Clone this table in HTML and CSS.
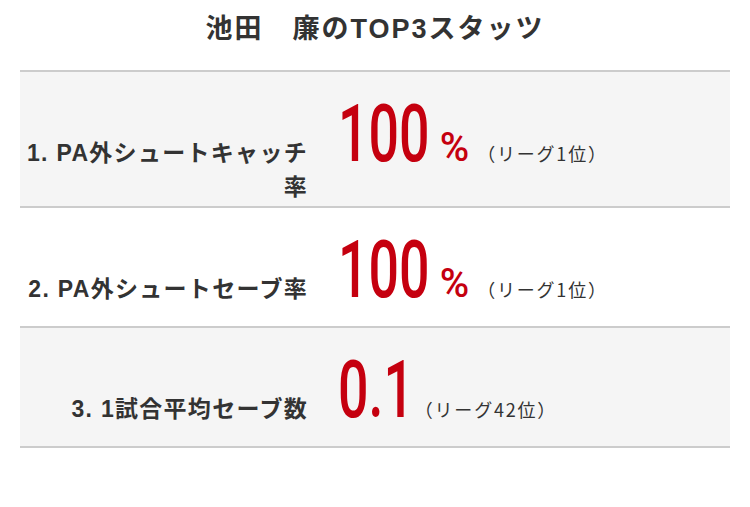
FILE: index.html
```html
<!DOCTYPE html>
<html lang="ja">
<head>
<meta charset="utf-8">
<title>池田　廉のTOP3スタッツ</title>
<link rel="stylesheet" href="styles.css">
</head>
<body>
<section class="card">
  <h2 class="title">池田　廉のTOP3スタッツ</h2>
  <ul class="stats">
    <li class="stat">
      <div class="stat-label">1. PA外シュートキャッチ率</div>
      <div class="stat-value"><span class="num num-100">100</span><span class="unit">%</span><span class="rank">（リーグ1位）</span></div>
    </li>
    <li class="stat">
      <div class="stat-label">2. PA外シュートセーブ率</div>
      <div class="stat-value"><span class="num num-100">100</span><span class="unit">%</span><span class="rank">（リーグ1位）</span></div>
    </li>
    <li class="stat">
      <div class="stat-label">3. 1試合平均セーブ数</div>
      <div class="stat-value"><span class="num num-dec">0.1</span><span class="rank rank-dec">（リーグ42位）</span></div>
    </li>
  </ul>
</section>
</body>
</html>
```

FILE: styles.css
```css
html, body {
  margin: 0;
  padding: 0;
  background: #ffffff;
}

body {
  font-family: "Liberation Sans", "Noto Sans CJK JP", sans-serif;
  color: #333333;
}

.card {
  width: 750px;
}

.title {
  margin: 0;
  padding: 10px 0 21px;
  font-size: 27px;
  line-height: 39px;
  font-weight: 700;
  letter-spacing: 2px;
  text-align: center;
  color: #333333;
}

.stats {
  list-style: none;
  margin: 0 20px;
  padding: 0;
  border-top: 2px solid #cccccc;
}

.stat {
  display: flex;
  align-items: baseline;
  padding: 22px 0 2px;
  min-height: 94px;
  border-bottom: 2px solid #cccccc;
  background: #ffffff;
}

.stat:nth-child(odd) {
  background: #f5f5f5;
}

.stat-label {
  flex: 0 0 285px;
  margin-left: 3px;
  font-size: 23px;
  line-height: 34px;
  font-weight: 700;
  letter-spacing: 1.3px;
  text-align: right;
  color: #333333;
}

.stat-value {
  margin-left: 30px;
  color: #c5000f;
  white-space: nowrap;
}

.num {
  display: inline-block;
  font-family: Roboto, "Liberation Sans", sans-serif;
  font-size: 79px;
  line-height: 80px;
  font-weight: 500;
  transform: scaleX(0.68);
  transform-origin: 0 0;
}

.num-100 {
  margin-right: -42px;
}

.num-dec {
  margin-right: -35px;
}

.unit {
  margin-left: 9px;
  font-family: Roboto, "Liberation Sans", sans-serif;
  font-size: 40px;
  font-weight: 500;
}

.rank {
  margin-left: 8px;
  font-family: "Noto Sans CJK JP", sans-serif;
  font-size: 18px;
  font-weight: 400;
  letter-spacing: 1.8px;
  color: #333333;
}

.rank-dec {
  margin-left: 0;
}
```
